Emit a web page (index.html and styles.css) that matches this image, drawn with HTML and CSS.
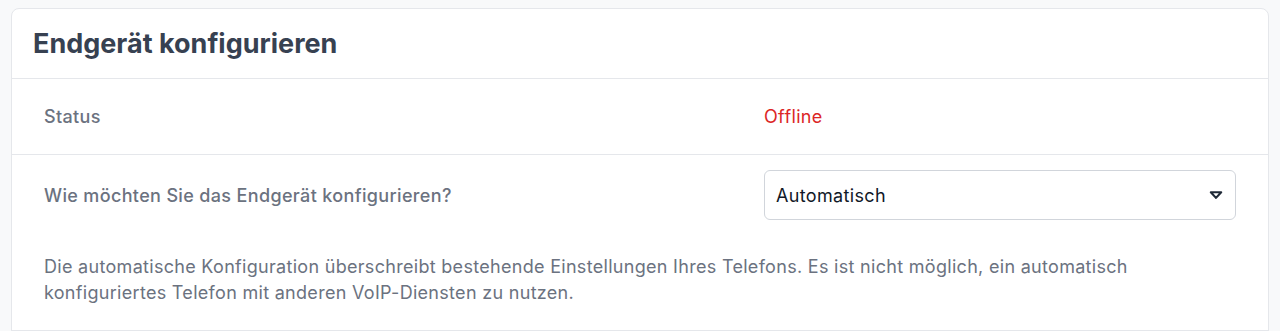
FILE: index.html
```html
<!doctype html>
<html lang="de">
<head>
<meta charset="utf-8">
<title>Endgerät konfigurieren</title>
<link rel="stylesheet" href="styles.css">
</head>
<body>

<div class="card">

    <header class="card-head">
        <h1>Endgerät konfigurieren</h1>
    </header>

    <div class="row">
        <div class="label">Status</div>
        <div class="value offline">Offline</div>
    </div>

    <div class="row row-last">
        <div class="label">Wie möchten Sie das Endgerät konfigurieren?</div>
        <div class="value">
            <div class="select">
                <span>Automatisch</span>
                <svg width="14" height="10" viewBox="0 0 14 10"><path d="M1.8 2.2h10.4L7 7.9z" fill="none" stroke="#1f2937" stroke-width="2.1" stroke-linejoin="round"/></svg>
            </div>
        </div>
        <p class="hint">Die automatische Konfiguration überschreibt bestehende Einstellungen Ihres Telefons. Es ist nicht möglich, ein automatisch konfiguriertes Telefon mit anderen VoIP-Diensten zu nutzen.</p>
    </div>

</div>

</body>
</html>
```

FILE: styles.css
```css
html, body { margin: 0; padding: 0; }
body { background-color: #f8f9fa; font-family: Inter, "Liberation Sans", Arial, sans-serif; padding: 8px 11px 0 11px; }
* { box-sizing: border-box; }

.card { background: #fff; border: 1px solid #e5e7eb; border-radius: 8px 8px 0 0; }

.card-head { height: 70px; padding: 0 21px; display: flex; align-items: center; border-bottom: 1px solid #e5e7eb; }
.card-head h1 { margin: 0; font-size: 27px; font-weight: 700; color: #374151; }

.row { display: grid; grid-template-columns: 1fr 472px; padding: 0 32px; border-bottom: 1px solid #e5e7eb; align-items: center; min-height: 76px; }
.row-last { padding-top: 15px; padding-bottom: 24px; }

.label { font-size: 18px; font-weight: 500; color: #6b7280; letter-spacing: 0.35px; }
.value { font-size: 18px; letter-spacing: 0.35px; }
.offline { color: #dc2626; }

.select { height: 50px; border: 1px solid #d1d5db; border-radius: 6px; display: flex; align-items: center; justify-content: space-between; padding: 0 12px 0 11px; color: #111827; }

.hint { grid-column: 1 / -1; margin: 34px 0 0 0; font-size: 18px; line-height: 26px; color: #6b7280; letter-spacing: 0.3px; }
```
